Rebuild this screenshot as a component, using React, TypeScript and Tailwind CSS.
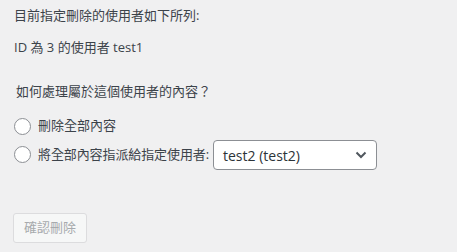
import React from "react";

export default function App() {
  const font = { fontFamily: '"Open Sans", "Noto Sans CJK TC", sans-serif' };
  return (
    <div
      className="w-[457px] h-[252px] bg-[#f0f0f1] text-[#3c434a] text-[13px] overflow-hidden pl-[14px]"
      style={font}
    >
      <p className="pt-[6px] h-[24px] leading-[18px]">目前指定刪除的使用者如下所列:</p>
      <p className="mt-[14px] h-[18px] leading-[18px]">ID 為 3 的使用者 test1</p>
      <p className="mt-[26px] h-[18px] leading-[18px] pl-[2px]">如何處理屬於這個使用者的內容？</p>
      <div className="mt-[12px] flex items-center h-[28px] gap-[7px]">
        <span className="w-[17px] h-[17px] rounded-full border border-[#8c8f94] bg-white shrink-0" />
        <span>刪除全部內容</span>
      </div>
      <div className="flex items-center h-[30px] gap-[6px]">
        <span className="w-[17px] h-[17px] rounded-full border border-[#8c8f94] bg-white shrink-0 -mt-[2px] mr-[1px]" />
        <span className="tracking-[-0.1px]">將全部內容指派給指定使用者:</span>
        <div className="ml-[-2px] w-[164px] h-[30px] border border-[#8c8f94] rounded-[4px] bg-white flex items-center justify-between pl-[9px] pr-[9px] text-[14px] text-[#2c3338]">
          <span>test2 (test2)</span>
          <svg width="12" height="8" viewBox="0 0 12 8">
            <polyline points="1.5,1.5 6,6 10.5,1.5" fill="none" stroke="#50575e" strokeWidth="2" />
          </svg>
        </div>
      </div>
      <button className="mt-[43px] -ml-[1px] w-[74px] h-[30px] border border-[#dcdcde] rounded-[3px] bg-[#f6f7f7] text-[#a7aaad] text-[13px]">
        確認刪除
      </button>
    </div>
  );
}
